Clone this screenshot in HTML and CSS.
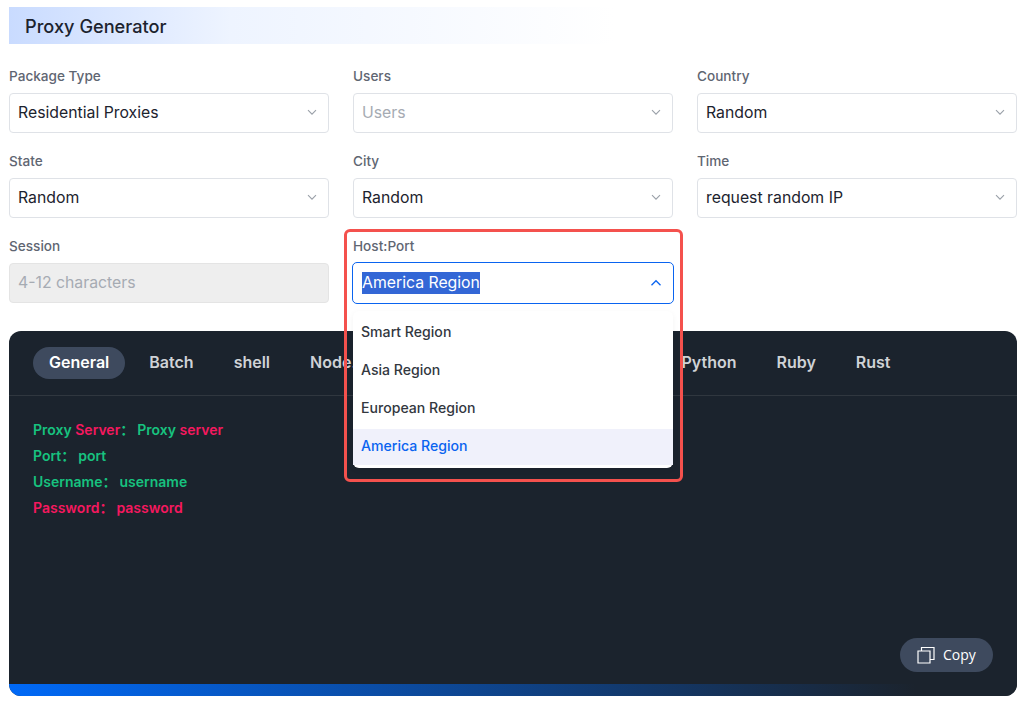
FILE: index.html
```html
<!DOCTYPE html>
<html lang="en">
    <head>
        <meta charset="UTF-8">
        <meta name="viewport" content="width=device-width, initial-scale=1.0">
        <title>Proxy Generator</title>
        <link rel="stylesheet" href="styles.css">
    </head>
    <body>
        <h2 class="title">Proxy Generator</h2>

        <form class="fields">
            <div class="field">
                <label>Package Type</label>
                <div class="select"><span>Residential Proxies</span><svg class="arrow" viewBox="0 0 12 12"><path d="M2 4.200l4 4 4-4"/></svg></div>
            </div>
            <div class="field">
                <label>Users</label>
                <div class="select placeholder"><span>Users</span><svg class="arrow" viewBox="0 0 12 12"><path d="M2 4.200l4 4 4-4"/></svg></div>
            </div>
            <div class="field">
                <label>Country</label>
                <div class="select"><span>Random</span><svg class="arrow" viewBox="0 0 12 12"><path d="M2 4.200l4 4 4-4"/></svg></div>
            </div>
            <div class="field">
                <label>State</label>
                <div class="select"><span>Random</span><svg class="arrow" viewBox="0 0 12 12"><path d="M2 4.200l4 4 4-4"/></svg></div>
            </div>
            <div class="field">
                <label>City</label>
                <div class="select"><span>Random</span><svg class="arrow" viewBox="0 0 12 12"><path d="M2 4.200l4 4 4-4"/></svg></div>
            </div>
            <div class="field">
                <label>Time</label>
                <div class="select"><span>request random IP</span><svg class="arrow" viewBox="0 0 12 12"><path d="M2 4.200l4 4 4-4"/></svg></div>
            </div>
            <div class="field">
                <label>Session</label>
                <div class="select disabled"><span>4-12 characters</span></div>
            </div>
            <div class="field host">
                <label>Host:Port</label>
                <div class="select open"><span class="selected">America Region</span><svg class="arrow" viewBox="0 0 12 12"><path d="M1.500 8.200L6 3.700l4.500 4.500"/></svg></div>
                <ul class="menu">
                    <li>Smart Region</li>
                    <li>Asia Region</li>
                    <li>European Region</li>
                    <li class="active">America Region</li>
                </ul>
                <div class="callout"></div>
            </div>
        </form>

        <section class="panel">
            <nav class="tabs">
                <a class="tab current">General</a>
                <a class="tab">Batch</a>
                <a class="tab">shell</a>
                <a class="tab">Node.js</a>
                <a class="tab after-menu">Python</a>
                <a class="tab">Ruby</a>
                <a class="tab">Rust</a>
            </nav>
            <div class="code">
                <p><span class="green">Proxy</span> <span class="pink">Server</span><span class="green">：</span><span class="green value">Proxy</span> <span class="pink">server</span></p>
                <p><span class="green">Port：</span><span class="green value">port</span></p>
                <p><span class="green">Username：</span><span class="green value">username</span></p>
                <p><span class="pink">Password：</span><span class="pink value">password</span></p>
            </div>
            <div class="actions">
                <button class="copy" type="button">
                    <svg viewBox="0 0 18 18"><path d="M1 5h12v12H1z"/><path d="M4.500 5V1.500H17V13.500H13"/></svg>
                    <span class="copy-text">Copy</span>
                </button>
            </div>
            <div class="bar"></div>
        </section>
    </body>
</html>
```

FILE: styles.css
```css
* { box-sizing: border-box; }
html, body { margin: 0; padding: 0; background: #fff; }
body { padding: 7px 8px 6px 9px; font-family: "Inter", "Noto Sans CJK SC", sans-serif; color: #1c232e; height: 702px; overflow: hidden; }

.title { margin: 0; height: 37px; padding-left: 16px; font-size: 18.200px; font-weight: 500; line-height: 38px; color: #1c232e; background: linear-gradient(to right, #c9dbff, #eef4ff 22%, #fff 60%); }

.fields { display: grid; grid-template-columns: repeat(3, 320px); column-gap: 24px; row-gap: 17px; margin-top: 23px; height: 264px; align-content: start; }
.field { position: relative; height: 68px; }
.field label { display: block; height: 26px; font-size: 13.600px; font-weight: 500; line-height: 18px; color: #5f6672; }

.select { display: flex; align-items: center; justify-content: space-between; height: 40px; padding: 0 10px 2px 8px; font-size: 15.800px; color: #1c232e; background: #fff; border: 1px solid #dfe2e7; border-radius: 4px; }
.arrow { width: 12px; height: 12px; fill: none; stroke: #9aa0a8; stroke-width: 1.1; }
.placeholder { color: #a6abb3; }
.disabled { color: #a6abb3; background: #eeeeee; border-color: #e4e4e4; }
.open { margin: -1px -1px 0; padding: 0 11px 0 9px; height: 42px; border-color: #0a64f0; border-radius: 5px; }
.open .arrow { stroke: #0a64f0; stroke-width: 1.3; }
.selected { color: #fff; background: #3367d6; line-height: 22px; }

.menu { position: absolute; z-index: 2; top: 74px; left: 0; right: 0; margin: 0; padding: 4px 0 3px; list-style: none; background: #fff; border-radius: 6px; box-shadow: 0 2px 6px rgba(0, 0, 0, 0.05); }
.menu li { display: flex; align-items: center; height: 36px; margin-bottom: 2px; padding: 0 0 3px 8px; font-size: 14.100px; font-weight: 500; color: #33383f; }
.menu li:last-child { margin-bottom: 0; }
.menu .active { color: #0a64f0; background: #f0f1fb; }
.callout { position: absolute; z-index: 3; top: -8px; left: -9px; width: 339px; height: 253px; border: 3px solid #f4514d; border-radius: 6px; pointer-events: none; }

.panel { display: flex; flex-direction: column; height: 365px; overflow: hidden; background: #1b232d; border-radius: 12px; }
.tabs { display: flex; gap: 8px; height: 65px; padding: 16px 24px 0; border-bottom: 1px solid #30373f; }
.tab { height: 32px; padding: 0 16px; font-size: 16px; font-weight: 600; line-height: 31px; color: #cfd2d6; border-radius: 16px; }
.tab.current { color: #fff; background: #3e4a5e; }
.tab.after-menu { margin-left: 272px; }

.code { flex: 1; padding: 21px 24px 0; font-size: 14px; font-weight: 600; }
.code p { margin: 0; height: 26px; line-height: 26px; }
.green { color: #17c27f; }
.pink { color: #f5185f; }
.value { margin-left: 3px; }

.actions { display: flex; justify-content: flex-end; padding: 0 24px 12px; }
.copy { display: flex; align-items: center; gap: 8px; height: 34px; width: 93px; padding: 0 0 0 17px; font-family: "Open Sans", sans-serif; font-size: 14px; color: #fff; background: #3e4a5e; border: 0; border-radius: 17px; }
.copy svg { width: 18px; height: 18px; fill: none; stroke: #fff; stroke-width: 1.2; }
.copy-text { padding-bottom: 2px; }

.bar { height: 12px; background: linear-gradient(to right, #0069f7, #1b232d 90%); }
```
